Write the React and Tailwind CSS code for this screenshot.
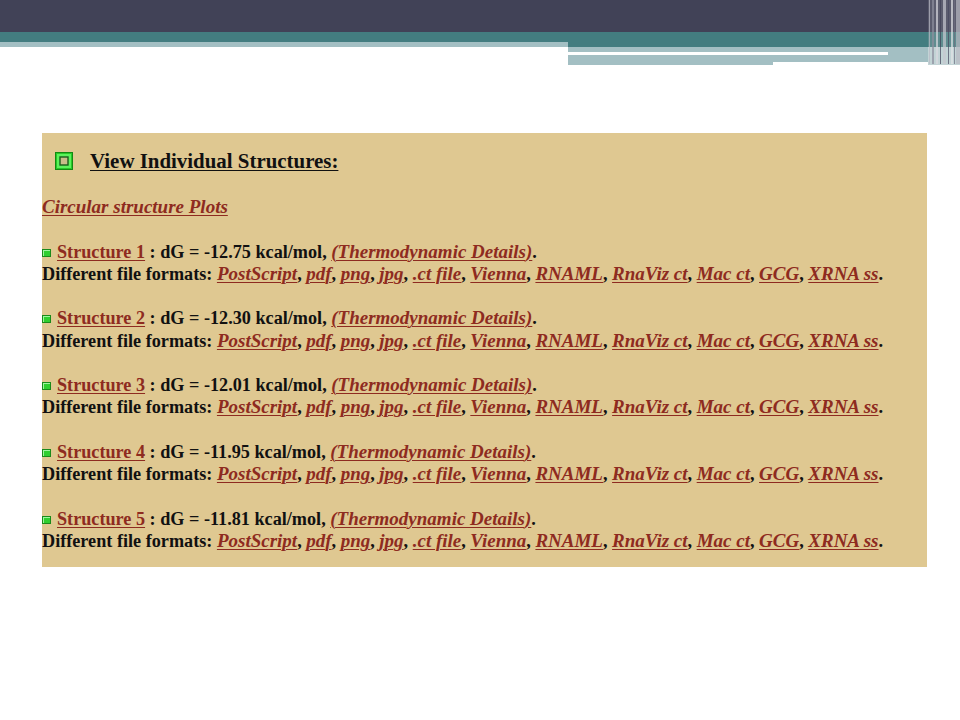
import React from 'react';

const formats = ['PostScript', 'pdf', 'png', 'jpg', '.ct file', 'Vienna', 'RNAML', 'RnaViz ct', 'Mac ct', 'GCG', 'XRNA ss'];

const structures = [
    { n: 1, dg: '-12.75' },
    { n: 2, dg: '-12.30' },
    { n: 3, dg: '-12.01' },
    { n: 4, dg: '-11.95' },
    { n: 5, dg: '-11.81' },
];

const Link = ({ children, italic }) => (
    <span className={`text-[#8e2b20] underline decoration-1 underline-offset-2 ${italic ? 'italic text-[19px]' : ''}`}>{children}</span>
);

const Bullet = () => (
    <span className="inline-block w-[9px] h-[8px] mr-[6px] align-[1px] bg-[#2fcf2f] border border-[#1a8a1a] shadow-[inset_1px_1px_0_#9ef59e]" />
);

const CheckIcon = () => (
    <svg width="18" height="18" viewBox="0 0 18 18">
        <rect x="0.5" y="0.5" width="17" height="17" fill="#27c927" stroke="#128a12" />
        <rect x="2" y="2" width="14" height="14" fill="#5cf25c" />
        <rect x="5" y="5" width="8" height="8" fill="#c9bd8a" stroke="#1b5e1b" strokeWidth="1.4" />
    </svg>
);

const Header = () => (
    <div className="relative h-[66px]">
        <div className="h-[32px] bg-[#414257]" />
        <div className="flex">
            <div className="w-[568px]">
                <div className="h-[10px] bg-[#437d80]" />
                <div className="h-[5px] bg-[#a3bfc3]" />
            </div>
            <div className="flex-1 pr-[14px]">
                <div className="h-[15px] bg-[#437d80]" />
                <div className="h-[5px] bg-[#a3bfc3]" />
                <div className="flex h-[3px]">
                    <div className="w-[320px] bg-white" />
                    <div className="flex-1 bg-[#a3bfc3]" />
                </div>
                <div className="flex">
                    <div className="w-[205px] h-[10px] bg-[#a3bfc3]" />
                    <div className="flex-1 h-[7px] bg-[#a3bfc3]" />
                </div>
            </div>
        </div>
        <svg className="absolute top-0 right-0" width="32" height="66" viewBox="0 0 32 66">
            <rect x="0" y="0" width="32" height="32" fill="#5b5c6e" />
            <rect x="0" y="32" width="32" height="15" fill="#5f8c8f" />
            <rect x="0" y="47" width="32" height="18" fill="#c2d3d5" />
            <rect x="1" y="0" width="1" height="64" fill="#b9bac4" opacity="0.7" />
            <rect x="4" y="0" width="2" height="64" fill="#8d8e9c" opacity="0.7" />
            <rect x="8" y="0" width="2" height="64" fill="#d8d9de" opacity="0.7" />
            <rect x="12" y="0" width="1" height="64" fill="#3f4055" opacity="0.7" />
            <rect x="15" y="0" width="3" height="64" fill="#c6c7ce" opacity="0.7" />
            <rect x="20" y="0" width="1" height="64" fill="#474860" opacity="0.7" />
            <rect x="23" y="0" width="2" height="64" fill="#e1e2e6" opacity="0.7" />
            <rect x="26" y="0" width="1" height="64" fill="#6d6e80" opacity="0.7" />
            <rect x="28" y="0" width="4" height="64" fill="#b8b9c2" opacity="0.7" />
        </svg>
    </div>
);

export default function App() {
    return (
        <div className="w-[960px] h-[720px] bg-white overflow-hidden" style={{ fontFamily: '"Liberation Serif", "Times New Roman", serif' }}>
            <Header />
            <div className="mt-[67px] ml-[42px] w-[885px] bg-[#dfc891] pt-[13px] pb-[15px] font-bold text-[18.2px] text-[#111] leading-[22.25px]">
                <div className="flex items-center h-[30px] pl-[13px]">
                    <CheckIcon />
                    <span className="ml-[17px] text-[20.9px] underline decoration-1 underline-offset-2">View Individual Structures:</span>
                </div>
                <div className="mt-[20px]">
                    <Link italic>Circular structure Plots</Link>
                </div>
                <div className="h-[22.25px]" />
                {structures.map((s, i) => (
                    <div key={s.n} className={i > 0 ? 'mt-[22.25px]' : ''}>
                        <div className="whitespace-nowrap h-[22.25px]">
                            <Bullet />
                            <Link>Structure {s.n}</Link> : dG = {s.dg} kcal/mol, <Link italic>(Thermodynamic Details)</Link>.
                        </div>
                        <div className="whitespace-nowrap h-[22.25px]">
                            Different file formats:{' '}
                            {formats.map((f, j) => (
                                <React.Fragment key={f}>
                                    <Link italic>{f}</Link>
                                    {j < formats.length - 1 ? ', ' : '.'}
                                </React.Fragment>
                            ))}
                        </div>
                    </div>
                ))}
            </div>
        </div>
    );
}
